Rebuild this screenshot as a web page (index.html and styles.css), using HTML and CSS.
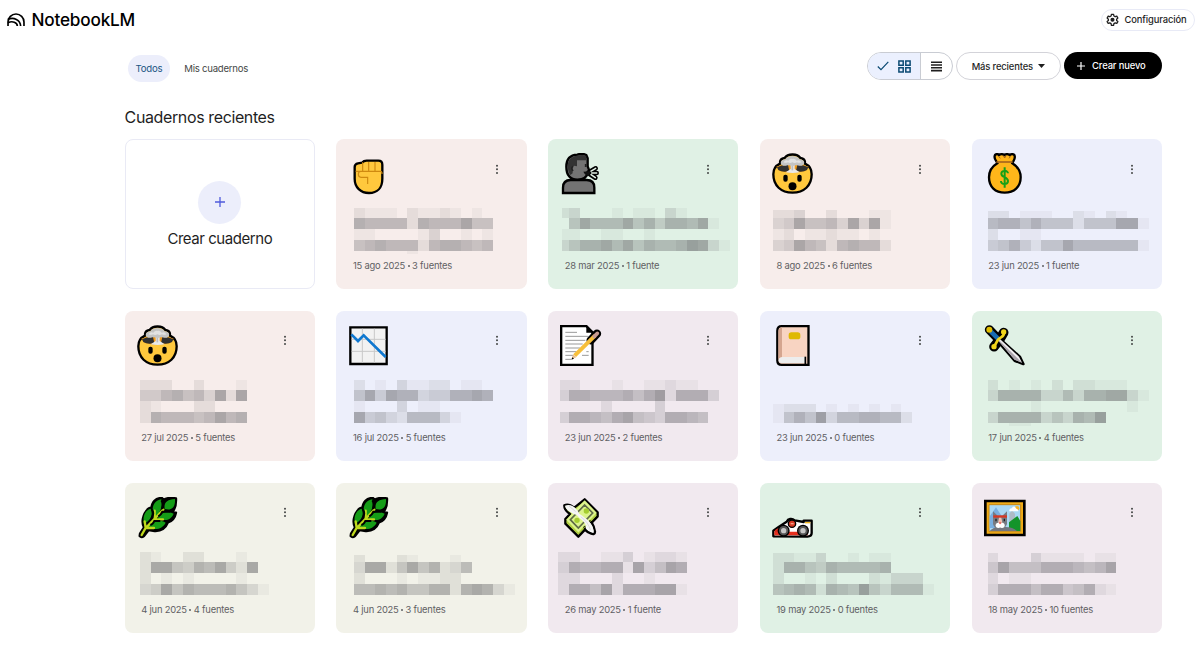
FILE: index.html
```html
<!DOCTYPE html>
<html lang="es">
<head>
    <meta charset="UTF-8">
    <meta name="viewport" content="width=device-width, initial-scale=1.0">
    <title>NotebookLM</title>
    <link rel="stylesheet" href="styles.css">
</head>
<body>
    <header>
        <div class="brand">
            <svg class="logo" viewBox="0 0 54 40" fill="none" stroke="#000" stroke-width="5">
                <path d="M3 39V27a24 24 0 0 1 48 0v12"/>
                <path d="M3 19c17-7 37 1 38 20"/>
                <path d="M3 29c13-6 28-1 28 10"/>
            </svg>
            <span>NotebookLM</span>
        </div>
        <button class="settings">
            <svg viewBox="0 0 24 24" width="13" height="13" fill="none" stroke="#1f1f1f" stroke-width="2.4" stroke-linejoin="round">
                <path d="M10 2.5h4l.6 3 2.4 1.400 2.900-1 2 3.500-2.300 2v2.400l2.300 2-2 3.500-2.900-1-2.400 1.400-.6 3h-4l-.6-3L7 18.300l-2.900 1-2-3.500 2.300-2v-2.400l-2.300-2 2-3.500 2.900 1 2.400-1.400z"/>
                <circle cx="12" cy="12.500" r="2.600" fill="#1f1f1f"/>
            </svg>
            <span>Configuración</span>
        </button>
    </header>

    <main>
        <div class="toolbar">
            <nav>
                <a class="tab active">Todos</a>
                <a class="tab">Mis cuadernos</a>
            </nav>
            <div class="actions">
                <div class="toggle">
                    <div class="toggle-item selected">
                        <svg width="12" height="10" viewBox="0 0 12 10" fill="none" stroke="#0b4a73" stroke-width="1.200"><path d="M.8 5.500l3.200 3.200L11.300.9"/></svg>
                        <svg width="13" height="13" viewBox="0 0 13 13" fill="none" stroke="#0b4a73" stroke-width="1.500"><path d="M.9.9h4.300v4.300H.9zM7.800.9h4.300v4.300H7.800zM.9 7.800h4.300v4.300H.9zM7.800 7.800h4.300v4.300H7.800z"/></svg>
                    </div>
                    <div class="toggle-item">
                        <svg width="11" height="11" viewBox="0 0 11 11" stroke="#1f1f1f" stroke-width="1.600"><path d="M0 1.200h11M0 4h11M0 6.800h11M0 9.600h11"/></svg>
                    </div>
                </div>
                <button class="sort"><span>Más recientes</span><svg width="7" height="4" viewBox="0 0 7 4"><path d="M0 0h7L3.500 4z" fill="#1f1f1f"/></svg></button>
                <button class="create"><svg width="8" height="8" viewBox="0 0 8 8" stroke="#fff" stroke-width="1.200"><path d="M4 0v8M0 4h8"/></svg><span>Crear nuevo</span></button>
            </div>
        </div>

        <h1>Cuadernos recientes</h1>
        <div class="grid" id="grid">
            <div class="card new-card">
                <div class="plus"><svg width="10" height="10" viewBox="0 0 10 10" stroke="#4f5bdc" stroke-width="1.300"><path d="M5 0v10M0 5h10"/></svg></div>
                <span>Crear cuaderno</span>
            </div>
        </div>
    </main>

    <svg class="sprites" width="0" height="0">
        <symbol id="fist" viewBox="0 0 126 126">
            <path d="M20 42q0-9 10-11l12-2q5-6 14-6h35q12 0 12 12v42c0 27-15 43-40 43S20 103 20 77z" fill="#ffc83d" stroke="#000" stroke-width="7" stroke-linejoin="round"/>
            <path d="M44 28v28M62 27v28M81 27v28M23 55h74q6 1 5 8M50 55H38q-7 0-7 9t8 9h20v20" fill="none" stroke="#cf8a10" stroke-width="3.500"/>
        </symbol>
        <symbol id="speaker" viewBox="0 0 126 126">
            <path d="M9 120v-16c0-15 9-23 23-23h48c14 0 23 8 23 23v16z" fill="#737373" stroke="#000" stroke-width="7"/>
            <path d="M19 41C19 18 32 6 52 5c8-3 19-3 27 1l4 10v24l5 13-5 3c-1 16-12 24-31 24C30 79 19 64 19 41z" fill="#737373" stroke="#000" stroke-width="7"/>
            <path d="M23 43C22 21 34 9 53 8c8-3 20-2 26 2v12H51v18l-9-2-5 8 1 15-7 5q-7-9-8-23z" fill="#333"/>
            <path d="M39 40q-7 5 0 14M77 33v9" stroke="#222" stroke-width="5" fill="none"/>
            <path d="M88 57l19-11M90 60h20M89 63l17 11" stroke="#000" stroke-width="14" stroke-linecap="round"/>
            <path d="M92 55l15-9M95 60h15M93 65l13 9" stroke="#e5f3e8" stroke-width="4.500" stroke-linecap="round"/>
            <path d="M70 56l22-2-5 14q-11 1-17-12" fill="#111"/>
        </symbol>
        <symbol id="exploding" viewBox="0 0 126 126">
            <path d="M4 64c0-14 7-26 20-32-1-11 6-16 14-17 9-13 37-15 47 0 9 1 15 6 14 17 13 6 20 18 20 32 0 34-23 55-57.500 55S4 98 4 64z" fill="#ffc83d" stroke="#000" stroke-width="7"/>
            <path d="M13 41q48-20 97 0l-8 12q-40 12-81 0z" fill="#ef9a1c"/>
            <path d="M15 43q14-8 33-7l4 18q-20 5-33-3zM109 43q-14-8-33-7l-4 18q20 5 33-3z" fill="#303030"/>
            <path d="M56 34h12v14l15 10q-21 4-42 0l15-10z" fill="#e9e9e9"/>
            <path d="M61 38v14" stroke="#bdbdbd" stroke-width="5"/>
            <path d="M34 38c-12-2-10-19 6-19 7-13 35-13 43 0 16 0 18 17 6 19-9 2-13-3-18-1-7 3-12 3-19 0-6-2-9 3-18 1z" fill="#c4c4c4"/>
            <path d="M35 28q4-9 14-5 5-7 12-5 8-2 13 5 10-4 14 5-7 3-13 0-7 4-14 0-7 4-13 0-7 3-13 0z" fill="#e2e2e2"/>
            <rect x="34" y="65" width="13" height="21" rx="6"/>
            <rect x="76" y="65" width="13" height="21" rx="6"/>
            <circle cx="61.500" cy="100" r="12"/>
        </symbol>
        <symbol id="moneybag" viewBox="0 0 126 126">
            <path d="M33 6q6-5 12 0 8-5 16 0 8-5 16 0 8-5 14 0 4 8-3 19l-3 6c15 9 25 23 25 42 0 29-20 46-48 46S15 102 15 73c0-19 10-33 25-42l-3-6Q29 14 33 6z" fill="#ffb61a" stroke="#000" stroke-width="7"/>
            <path d="M37 27h49" stroke="#a6651f" stroke-width="5"/>
            <path d="M44 10l5 6M58 8l4 7 4-7M80 10l-5 6" stroke="#a6651f" stroke-width="3" fill="none"/>
            <path d="M72 61c0-10-20-10-20 1 0 12 20 9 20 22 0 12-22 12-21 0M62 43v61" fill="none" stroke="#17a017" stroke-width="6"/>
        </symbol>
        <symbol id="chart" viewBox="0 0 126 126">
            <path d="M7 7h109v110H7z" fill="#f2f2f2" stroke="#000" stroke-width="7"/>
            <path d="M43 11v102M79 11v102M11 43h102M11 79h102" stroke="#c8c8c8" stroke-width="3"/>
            <path d="M10 28l20 20 17-17 66 65" fill="none" stroke="#0f78d0" stroke-width="8"/>
        </symbol>
        <symbol id="memo" viewBox="0 0 126 126">
            <path d="M3.500 3.500h76l18 18v98h-94z" fill="#fff" stroke="#000" stroke-width="7"/>
            <path d="M79 4v19h18z"/>
            <path d="M16 22h35M16 34h69M16 46h60M16 57h52M16 69h44M16 80h33M16 91h24M16 103h17M79 80h7M66 91h20" stroke="#999" stroke-width="3"/>
            <path d="M92 46l19-20" stroke="#000" stroke-width="25" stroke-linecap="round"/>
            <path d="M44 92l61-60" stroke="#f7bf3a" stroke-width="12"/>
            <path d="M103 34l9-9" stroke="#c79b91" stroke-width="11" stroke-linecap="round"/>
            <path d="M39 88l10 9-14 6z" fill="#e8bf90"/><path d="M34 104l3-7 5 4z"/>
        </symbol>
        <symbol id="book" viewBox="0 0 126 126">
            <path d="M29 3.500h80.500v116H29q-13 0-13-13V17Q16 3.500 29 3.500z" fill="#f8d4c2" stroke="#000" stroke-width="7"/>
            <path d="M30 7v90q-11 1-11 10V20Q19 9 30 7z" fill="#d4a58f"/>
            <path d="M100 96H31q-11 2-11 10 0 8 10 8h69z" fill="#ededed"/>
            <path d="M100 95v25" stroke="#000" stroke-width="5"/>
            <rect x="50" y="22" width="35" height="21" rx="8" fill="#dfb900"/>
        </symbol>
        <symbol id="dagger" viewBox="0 0 126 126">
            <g stroke="#000" stroke-linecap="round" stroke-linejoin="round">
                <path d="M16 14l24 25" stroke-width="27"/>
                <path d="M59 23q-10 21-29 42" fill="none" stroke-width="29"/>
                <path d="M48 42l60 54 10 21-26-10-50-58z" stroke-width="8"/>
            </g>
            <path d="M20 19l22 22" stroke="#176bb0" stroke-width="14"/>
            <circle cx="16" cy="14" r="9" fill="#e0bd00"/>
            <path d="M47 41l58 54 9 18-22-9-48-56z" fill="#f0eef0"/>
            <path d="M45 46l69 67-22-9-48-56z" fill="#aaa4ac"/>
            <path d="M59 22c4 14-10 13-16 21-6 8-6 12-12 20" fill="none" stroke="#f1d51b" stroke-width="8" stroke-linecap="round"/>
            <circle cx="59" cy="21" r="8" fill="#f1d51b"/><circle cx="30" cy="65" r="8" fill="#f1d51b"/>
        </symbol>
        <symbol id="herb" viewBox="0 0 126 126">
            <path d="M9 110l12-19c-8-13-5-39 13-56 3-2 7-2 9 1 1-20 13-34 32-33l5 5C88 2 101 2 117 4c1 19-1 31-12 42l12 1c-3 15-11 25-24 29-7 17-20 27-40 26L35 99 21 117q-8 6-13 0z" fill="#000" stroke="#000" stroke-width="7" stroke-linejoin="round"/>
            <path d="M83 36C80 16 91 7 114 6c1 23-7 36-31 30zM51 61C41 36 49 10 73 7c3 21 0 40-22 54zM21 82c-5-23 3-43 20-47 8 19 0 35-20 47zM62 63c14-19 28-22 48-13-8 19-26 25-48 13zM31 90c12-19 38-24 55-13-10 20-32 24-55 13z" fill="#159c17"/>
            <path d="M14 114l11-20 54-56M53 41v26h25M23 73l3 20h25" fill="none" stroke="#bfd91d" stroke-width="7" stroke-linecap="round"/>
            <path d="M73 10q8 10 2 26M44 37q8 8 2 24M64 58q8-4 12-14h24M40 84q8-2 12-12h18" fill="none" stroke="#000" stroke-width="6"/>
        </symbol>
        <symbol id="wings" viewBox="0 0 126 126">
            <path d="M74 7l39 39v12L55 119 16 80V66l14-15q-18-12-17-26 12-7 30 7z" fill="#bddb50" stroke="#000" stroke-width="7" stroke-linejoin="round"/>
            <path d="M72 61q28 9 33 43 0 11-13 5Q71 102 73 86" fill="#fff" stroke="#000" stroke-width="7"/>
            <path d="M74 10l36 37-55 59-36-38z" fill="#ddf48c"/>
            <path d="M74 24l24 24-43 45-24-25z" fill="none" stroke="#5f6a47" stroke-width="5"/>
            <path d="M20 75l35 35 53-55" fill="none" stroke="#a8c63a" stroke-width="3"/>
            <circle cx="51" cy="70" r="8" fill="#a5cd30"/><circle cx="79" cy="42" r="8" fill="#a5cd30"/>
            <path d="M15 26c18-6 33 5 43 24 21 14 42 30 43 53-13 2-20-2-21-15-5-14-21-23-30-34-18-6-33-15-35-28z" fill="#f5f5f5"/>
            <path d="M27 27l20 17M62 59q23 16 29 40" fill="none" stroke="#cdcdcd" stroke-width="2"/>
        </symbol>
        <symbol id="racecar" viewBox="0 0 126 126">
            <path d="M4 118V101l17-12 23-15c4-9 16-11 24-4l27 5V71h24v37q0 10-13 11z" fill="#fff" stroke="#000" stroke-width="7" stroke-linejoin="round"/>
            <path d="M7 104h100v11H7z" fill="#e5301e"/>
            <path d="M9 99l20-11 11 1-4 16H7z" fill="#d4281b"/>
            <circle cx="60" cy="80" r="11" fill="#d83b25" stroke="#000" stroke-width="4"/><path d="M56 80h9" stroke="#f6a08c" stroke-width="4"/>
            <path d="M99 77h16" stroke="#f2b61e" stroke-width="4"/>
            <circle cx="35" cy="101" r="18" fill="#000"/><circle cx="93" cy="101" r="18" fill="#000"/>
            <circle cx="35" cy="101" r="11" fill="#c5c5c5" stroke="#555" stroke-width="6"/>
            <circle cx="93" cy="101" r="11" fill="#c5c5c5" stroke="#555" stroke-width="6"/>
        </symbol>
        <symbol id="picture" viewBox="0 0 126 126">
            <path d="M4 12h117v102H4z" fill="#f1ad18" stroke="#000" stroke-width="8"/>
            <path d="M15 23h95v81H15z" fill="#a9d8f3" stroke="#c88710" stroke-width="3"/>
            <path d="M17 58l19-27 21 32v30H17z" fill="#79afe0"/>
            <path d="M76 102V50l8-10 9 10v52z" fill="#aebbc6"/>
            <circle cx="99" cy="34" r="7" fill="#f6b52c"/>
            <path d="M76 43q-2-8 7-9 7-11 14 1 7 1 6 8z" fill="#fff"/>
            <path d="M75 102V76l25-19 9 15v30z" fill="#13942a"/>
            <path d="M17 102q16-16 35-11 31-4 47 11z" fill="#73767e"/>
            <path d="M27 43l14 13h14l14-13v38q-6 16-21 15-17 0-21-15z" fill="#777b82"/>
            <path d="M28 55h41v7H28z" fill="#d83722"/>
            <path d="M45 62h7l3 15H42z" fill="#f3c4b2"/>
            <path d="M36 65v8M61 65v8" stroke="#222" stroke-width="4"/>
            <circle cx="43" cy="85" r="8" fill="#fff"/><circle cx="54" cy="85" r="8" fill="#fff"/><circle cx="48.500" cy="78" r="3.500" fill="#ee6f63"/>
        </symbol>
    </svg>

    <script src="script.js"></script>
</body>
</html>
```

FILE: styles.css
```css
* {
    box-sizing: border-box;
}
body {
    margin: 0;
    background-color: #fff;
    color: #1f1f1f;
    font-family: Inter, "Liberation Sans", sans-serif;
    font-size: 9.4px;
    letter-spacing: -0.12px;
    min-height: 648px;
}
button {
    font: inherit;
    letter-spacing: inherit;
    color: inherit;
    background-color: #fff;
    padding: 0;
    display: flex;
    align-items: center;
}
header {
    display: flex;
    justify-content: space-between;
    align-items: center;
    height: 40px;
    padding: 0 5.5px 1px 7px;
}
.brand {
    display: flex;
    align-items: center;
    gap: 6.5px;
    font-size: 17.2px;
    font-weight: 500;
    letter-spacing: -0.2px;
    color: #000;
}
.logo {
    width: 18px;
    height: 13.3px;
}
.settings {
    height: 22px;
    width: 94px;
    gap: 6px;
    padding-left: 4px;
    border: 1px solid #e8eaf6;
    border-radius: 11px;
    font-weight: 500;
}
main {
    width: 1037.5px;
    margin-left: 124.6px;
}
.toolbar {
    display: flex;
    justify-content: space-between;
    align-items: flex-start;
    height: 67px;
    padding-top: 12px;
}
nav {
    display: flex;
    padding: 3px 0 0 3px;
    letter-spacing: -0.25px;
}
.tab {
    height: 27px;
    line-height: 27px;
    padding: 0 8px;
    margin-right: 6px;
    border-radius: 14px;
    font-size: 9.6px;
    color: #444746;
}
.tab.active {
    background-color: #eceefb;
    color: #1b5583;
}
.actions {
    display: flex;
    gap: 3px;
}
.toggle {
    display: flex;
    width: 86.5px;
    height: 28px;
    border: 1px solid #c9ccd3;
    border-radius: 14px;
    overflow: hidden;
}
.toggle-item {
    flex: 1;
    display: flex;
    align-items: center;
    justify-content: center;
}
.toggle-item.selected {
    flex: 0 0 53px;
    gap: 9px;
    background-color: #ebf0fe;
    border-right: 1px solid #c9ccd3;
}
.sort {
    width: 104.5px;
    height: 28px;
    justify-content: center;
    gap: 5px;
    border: 1px solid #d3d3d9;
    border-radius: 15px;
    font-weight: 500;
}
.create {
    width: 98.5px;
    height: 27px;
    justify-content: center;
    gap: 7px;
    padding-right: 3px;
    border: 0;
    border-radius: 14px;
    background-color: #000;
    color: #fff;
    font-weight: 500;
}
h1 {
    margin: 0;
    height: 32px;
    line-height: 20px;
    font-size: 16px;
    font-weight: 400;
    letter-spacing: -0.38px;
}
.grid {
    display: grid;
    grid-template-columns: repeat(5, 190.4px);
    grid-auto-rows: 150.2px;
    gap: 21.6px 21.37px;
}
.card {
    position: relative;
    border-radius: 8px;
    padding: 14px 12px;
}
.new-card {
    display: flex;
    flex-direction: column;
    align-items: center;
    padding-top: 40.5px;
    border: 1px solid #e9eaf5;
    font-size: 15px;
    letter-spacing: -0.45px;
}
.new-card span {
    line-height: 20px;
    margin-top: 5px;
}
.plus {
    display: flex;
    align-items: center;
    justify-content: center;
    width: 43px;
    height: 43px;
    border-radius: 50%;
    background-color: #eceefb;
}
.pink { background-color: #f7edeb; }
.green { background-color: #e0f1e5; }
.blue { background-color: #edeffb; }
.mauve { background-color: #f1e9ef; }
.olive { background-color: #f2f2e9; }
.card-top {
    display: flex;
    justify-content: space-between;
    height: 42px;
    padding-right: 16px;
}
.emoji {
    width: 42px;
    height: 42px;
}
.menu {
    width: 4px;
    height: 11px;
    margin-top: 10.5px;
    fill: #444746;
}
.redacted {
    display: block;
    width: 190px;
    height: 50px;
    margin: 12px 0 0 -12px;
}
.meta {
    margin: 2px 0 0 4.7px;
    line-height: 14px;
    letter-spacing: -0.22px;
    color: #5f6063;
    white-space: nowrap;
}
.dot {
    display: inline-block;
    width: 2px;
    height: 2px;
    margin: 0 2.5px 2px;
    border-radius: 50%;
    background-color: #5f6063;
}
.sprites {
    position: absolute;
}
```

FILE: script.js
```js
// rows: one digit per block, 0 = empty, 9 = darkest
const notebooks = [
    { icon: 'fist', color: 'pink', date: '15 ago 2025', sources: '3 fuentes', x: 17.8, top: 1, rows: ['2111021121010', '7666627666855', '1100001300101', '5676662677656', '0000010000000'] },
    { icon: 'speaker', color: 'green', date: '28 mar 2025', sources: '1 fuente', x: 14, first: 7, top: 0.7, rows: ['2300010110310', '058666857477681', '1100110010000', '3577868576679831'] },
    { icon: 'exploding', color: 'pink', date: '8 ago 2025', sources: '6 fuentes', x: 12.8, top: 2.7, rows: ['22300200011', '34855638381', '12011211010', '34865267662'] },
    { icon: 'moneybag', color: 'blue', date: '23 jun 2025', sources: '1 fuente', x: 15.7, top: 3.7, rows: ['2201110021021', '677575552555881', '20011', '457425586666661'] },
    { icon: 'exploding', color: 'pink', date: '27 jul 2025', sources: '5 fuentes', x: 15, top: 1, rows: ['2220020001', '4467563828', '2100022000', '2766656867'] },
    { icon: 'chart', color: 'blue', date: '16 jul 2025', sources: '5 fuentes', x: 17.8, top: 1, rows: ['2010311220110', '5848773447787', '1000301100000', '8453266631'] },
    { icon: 'memo', color: 'mauve', date: '23 jun 2025', sources: '2 fuentes', x: 12, first: 9, top: 1, rows: ['2200010011211', '377666757927773', '0000200003', '37765785437765'] },
    { icon: 'book', color: 'blue', date: '23 jun 2025', sources: '0 fuentes', x: 12.8, top: 1, rows: ['', '', '1222010101010', '1575936677662'], thirdTop: 25 },
    { icon: 'dagger', color: 'green', date: '17 jun 2025', sources: '4 fuentes', x: 15.7, top: 1, rows: ['2010102022111', '377773363778831', '00001000000001', '37777353769', '0011'] },
    { icon: 'herb', color: 'olive', date: '4 jun 2025', sources: '4 fuentes', x: 15, top: 0.7, rows: ['2100220001', '28854768428', '2010100001', '348576667531'] },
    { icon: 'herb', color: 'olive', date: '4 jun 2025', sources: '3 fuentes', x: 17.8, top: 4, rows: ['2000210001', '38825857236', '2000101122', '667675577278731'] },
    { icon: 'wings', color: 'mauve', date: '26 may 2025', sources: '1 fuente', x: 10.3, top: 0.7, rows: ['220011301221', '376677183587', '220002001000', '277582777881'] },
    { icon: 'racecar', color: 'green', date: '19 may 2025', sources: '0 fuentes', x: 12.8, top: 2.4, rows: ['22113001011', '27754766667', '20010200021333', '567627659536661'] },
    { icon: 'picture', color: 'mauve', date: '18 may 2025', sources: '10 fuentes', x: 15.7, top: 2.4, rows: ['200031111011', '485557776568', '2011', '377757745721'] }
];

const CELL = 10.72;
const rowEdges = [1, 11.3, 22, 33, 43.5, 47.2];

function drawBlocks(book) {
    let rects = '';
    book.rows.forEach((row, r) => {
        let top = rowEdges[r];
        if (r === 0) top = book.top;
        if (r === 2 && book.thirdTop) top = book.thirdTop;
        let x = book.x;
        [...row].forEach((level, c) => {
            const width = c === 0 && book.first ? book.first : CELL;
            if (level !== '0') {
                rects += `<rect x="${x.toFixed(2)}" y="${top}" width="${width}" height="${(rowEdges[r + 1] - top).toFixed(2)}" fill-opacity="${(level * 0.062).toFixed(2)}"/>`;
            }
            x += width;
        });
    });
    return rects;
}

const grid = document.getElementById('grid');
notebooks.forEach(book => {
    const card = document.createElement('div');
    card.className = 'card ' + book.color;
    card.innerHTML = `
        <div class="card-top">
            <svg class="emoji"><use href="#${book.icon}"/></svg>
            <svg class="menu" viewBox="0 0 4 11"><circle cx="2" cy="1.700" r="1"/><circle cx="2" cy="5.300" r="1"/><circle cx="2" cy="8.900" r="1"/></svg>
        </div>
        <svg class="redacted" viewBox="0 0 190 50" fill="#606064" shape-rendering="crispEdges">${drawBlocks(book)}</svg>
        <div class="meta">${book.date}<span class="dot"></span>${book.sources}</div>`;
    grid.appendChild(card);
});
```
